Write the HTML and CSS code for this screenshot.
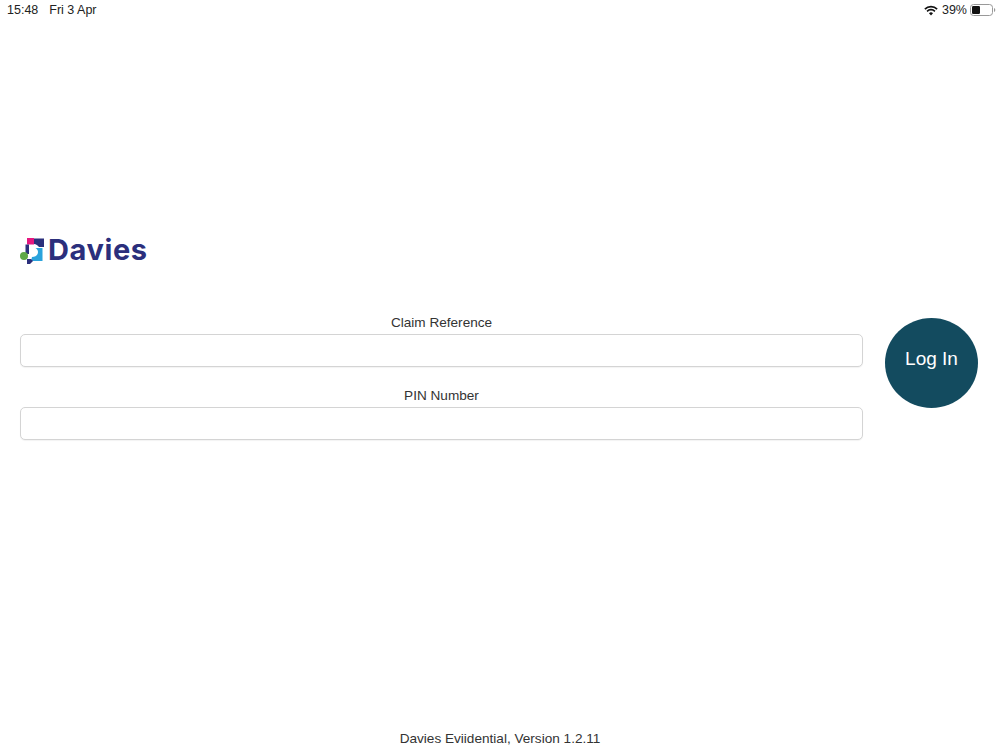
FILE: index.html
```html
<!DOCTYPE html>
<html lang="en">
<head>
<meta charset="utf-8">
<title>Davies Eviidential</title>
<link rel="stylesheet" href="styles.css">
</head>
<body>
<div class="page">
  <header class="status">
    <div class="status-left"><span>15:48</span><span>Fri 3 Apr</span></div>
    <div class="status-right">
      <svg class="wifi" width="14" height="11" viewBox="0 0 16 12"><path d="M1 4.4a10 10 0 0 1 14 0" fill="none" stroke="#111" stroke-width="1.9"/><path d="M3.5 6.9a6.5 6.5 0 0 1 9 0" fill="none" stroke="#111" stroke-width="1.9"/><path d="M8 11.6 5.7 9.2a3.3 3.3 0 0 1 4.6 0z" fill="#111"/></svg>
      <span>39%</span>
      <svg class="battery" width="26" height="12" viewBox="0 0 26 12"><rect x=".5" y=".5" width="22" height="11" rx="3" fill="none" stroke="#999"/><rect x="2" y="2" width="8" height="8" rx="1.2" fill="#111"/><path d="M24 4v4a2 2 0 0 0 1.3-2A2 2 0 0 0 24 4z" fill="#999"/></svg>
    </div>
  </header>
  <main class="main">
    <div class="logo">
      <svg width="24" height="28" viewBox="0 0 24 28">
        <path d="M14 2.5H24V11H19C18 9.5 16 8 14 8z" fill="#2b2f7c"/>
        <rect x="7" y="2" width="7" height="6.5" fill="#e5177f"/>
        <path d="M5.5 8.500h3.500V18H5.500z" fill="#2b2f7c"/>
        <path d="M15.500 12H22.500V25H11l1-4c3.500 0 6-2 6-5 0-2-1-3-2.500-4z" fill="#2aa3dc"/>
        <path d="M7 23h4l2 2-3 3H7z" fill="#2b2f7c"/>
        <circle cx="4" cy="20" r="4" fill="#5fa846"/>
      </svg>
      <span class="wordmark">Davies</span>
    </div>
    <div class="login">
      <form class="fields">
        <div class="field">
          <label class="label" for="claim">Claim Reference</label>
          <input class="input" id="claim" type="text">
        </div>
        <div class="field">
          <label class="label" for="pin">PIN Number</label>
          <input class="input" id="pin" type="text">
        </div>
      </form>
      <button class="login-btn" type="button">Log In</button>
    </div>
  </main>
  <footer class="footer">Davies Eviidential, Version 1.2.11</footer>
</div>
</body>
</html>
```

FILE: styles.css
```css
html, body {
  margin: 0;
  padding: 0;
  background: #fff;
}
* { box-sizing: border-box; }
.page {
  width: 1000px;
  height: 750px;
  display: flex;
  flex-direction: column;
  font-family: "Liberation Sans", Arial, sans-serif;
  color: #333;
  overflow: hidden;
}
.status {
  height: 20px;
  display: flex;
  justify-content: space-between;
  align-items: center;
  padding: 0 4px 0 7px;
  font-size: 12.5px;
  color: #222;
}
.status-left { display: flex; gap: 11px; }
.status-right { display: flex; align-items: center; gap: 3px; }
.wifi { margin-right: 1px; }
.main {
  flex: 1;
  padding: 215px 22px 0 20px;
}
.logo {
  height: 30px;
  display: flex;
  align-items: center;
  gap: 4px;
}
.wordmark {
  font-family: "Inter", "Liberation Sans", sans-serif;
  font-weight: 700;
  font-size: 29px;
  line-height: 30px;
  letter-spacing: 0.6px;
  color: #2b2f7c;
}
.login {
  margin-top: 50px;
  display: flex;
  align-items: flex-start;
  gap: 22px;
}
.fields {
  flex: 1;
  display: flex;
  flex-direction: column;
  gap: 21px;
}
.field {
  display: flex;
  flex-direction: column;
  gap: 3px;
}
.label {
  height: 16px;
  line-height: 16px;
  font-size: 13.6px;
  text-align: center;
  color: #333;
}
.input {
  display: block;
  width: 100%;
  height: 33px;
  border: 1px solid #d4d4d4;
  border-radius: 5px;
  background: #fff;
  outline: none;
  box-shadow: 0 1px 1px rgba(0, 0, 0, 0.05);
}
.login-btn {
  width: 93px;
  height: 90px;
  margin-top: 3px;
  border: 0;
  border-radius: 50%;
  background: #134b5f;
  color: #fff;
  font-family: "Liberation Sans", Arial, sans-serif;
  font-size: 19px;
  padding: 0 0 8px;
}
.footer {
  height: 24px;
  padding-top: 1px;
  text-align: center;
  font-size: 13.6px;
  line-height: 23px;
  color: #333;
}
```
